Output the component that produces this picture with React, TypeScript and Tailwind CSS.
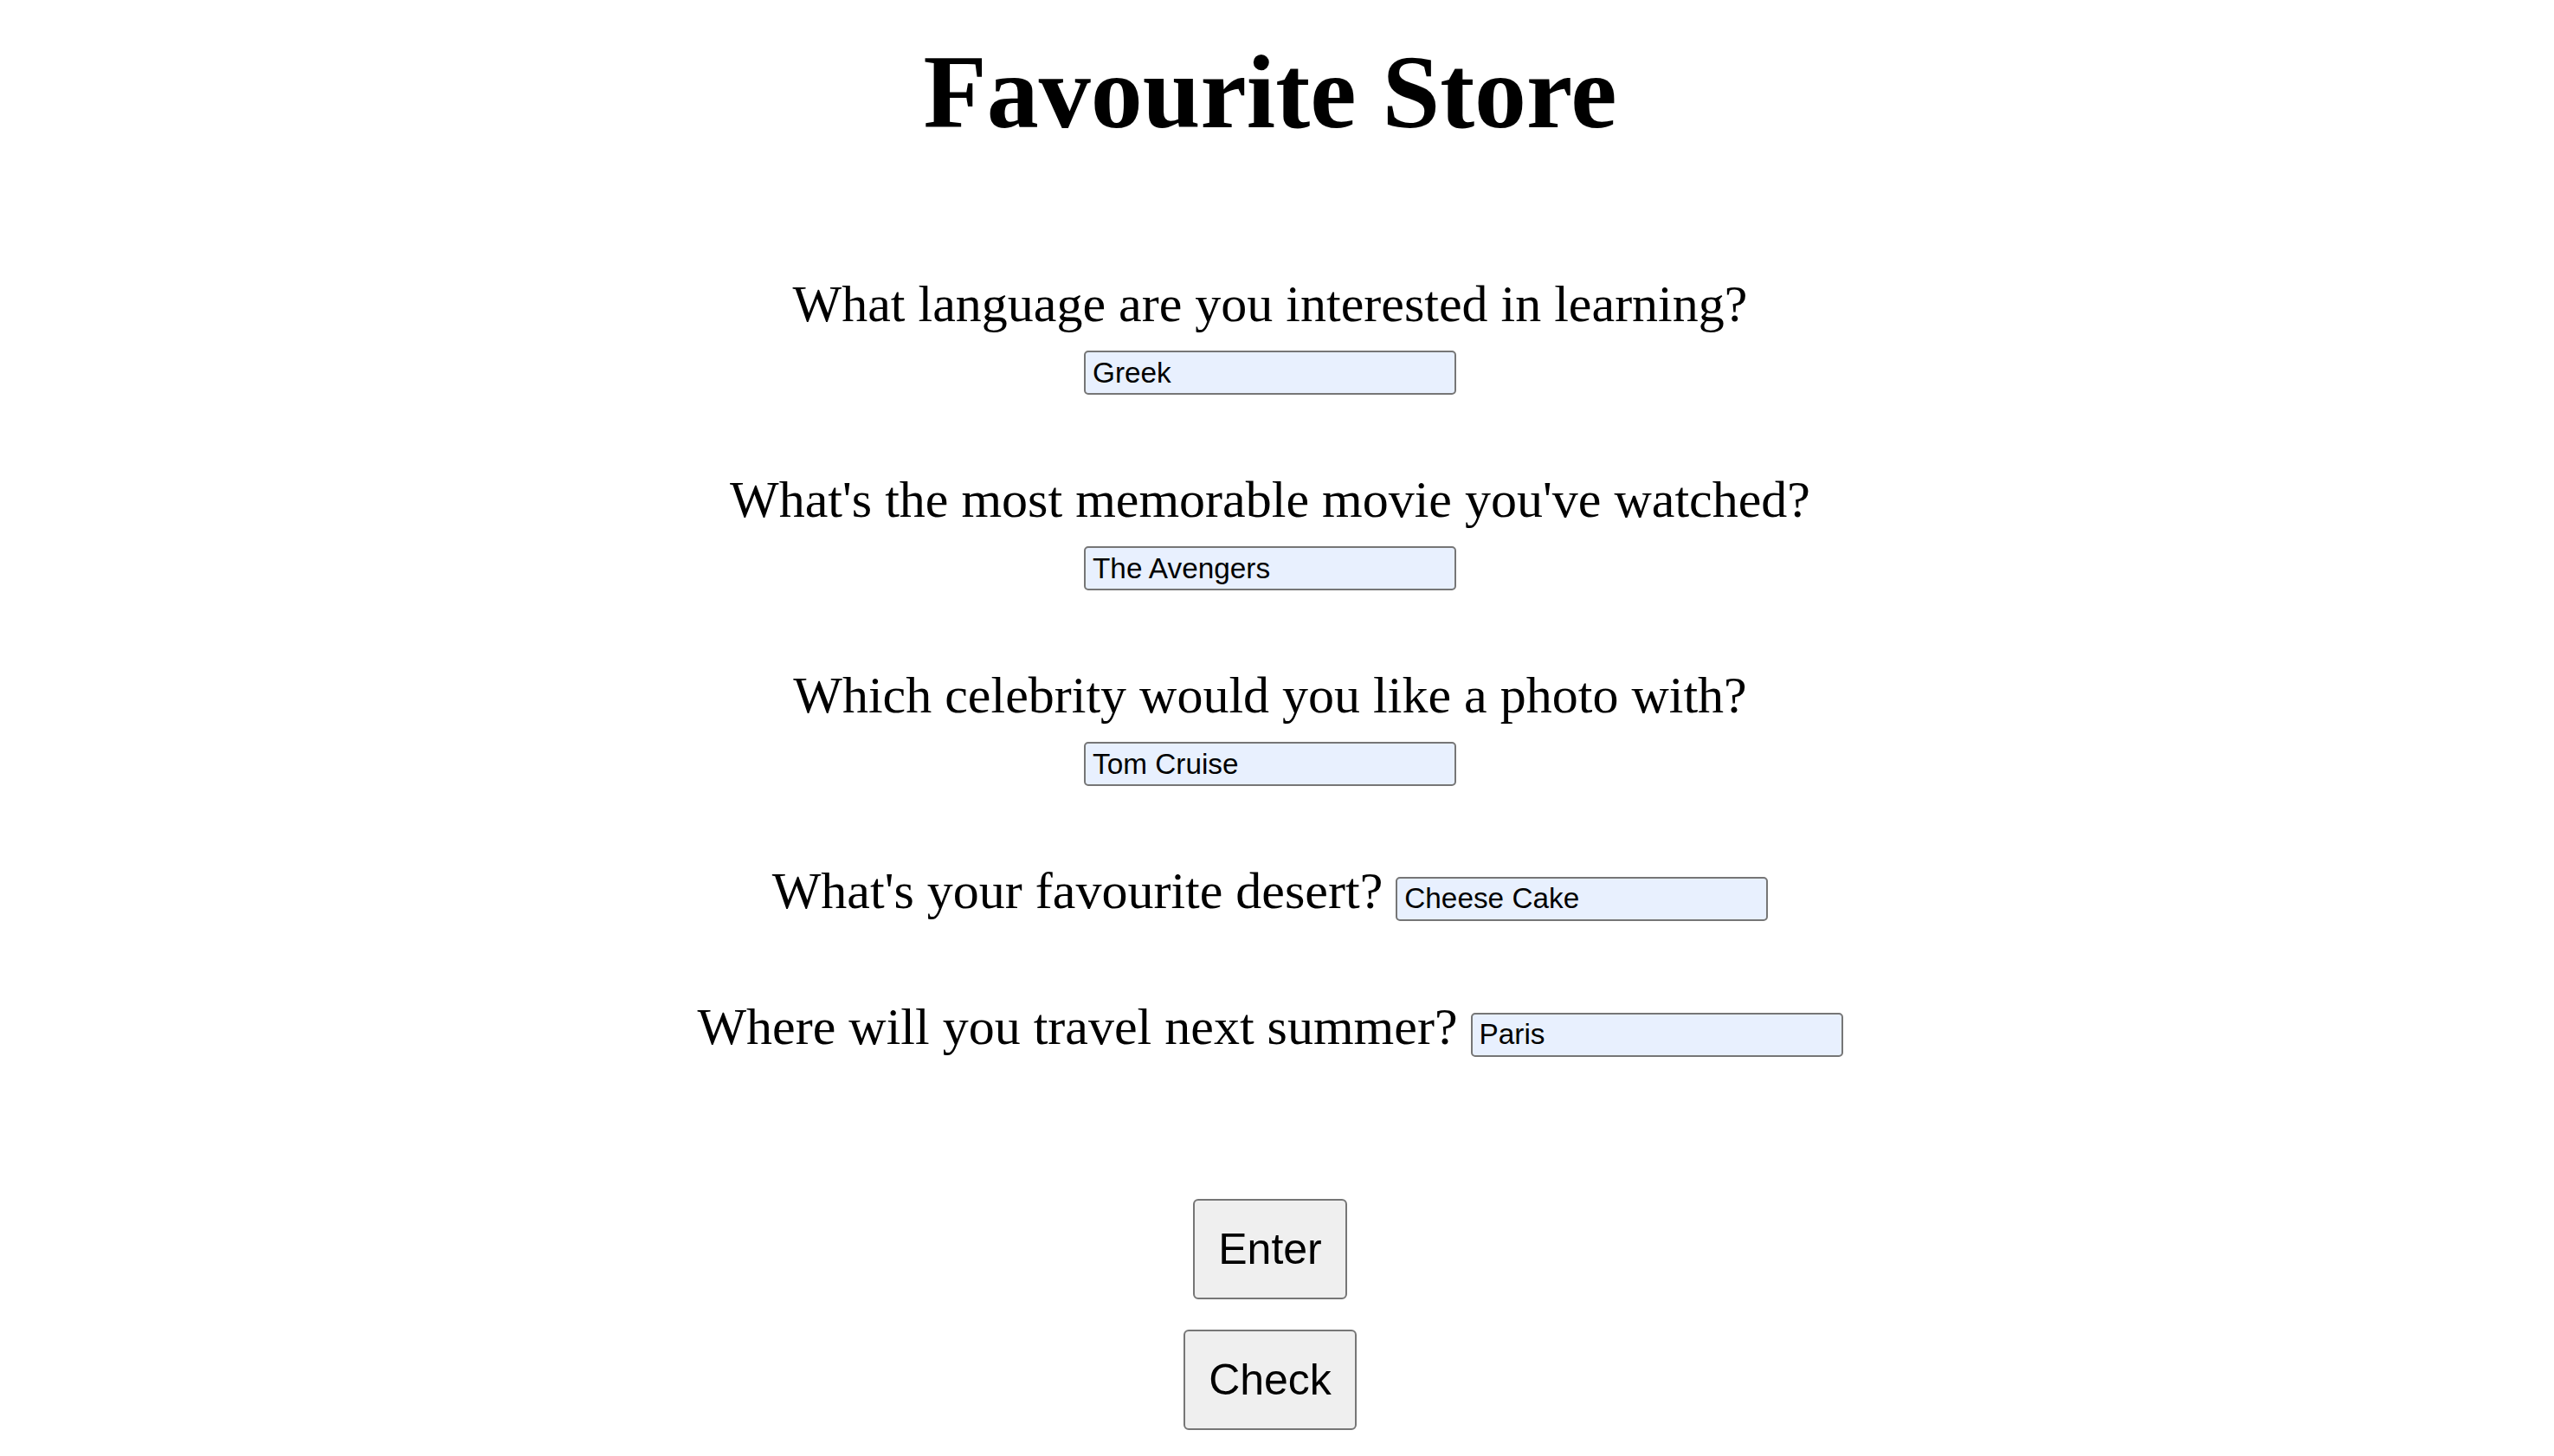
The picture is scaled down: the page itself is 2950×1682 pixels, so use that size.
import React from "react";

const inputCls =
  "w-[430px] h-[51px] border-2 border-solid border-[#767676] rounded-[5px] bg-[#e8f0fe] pl-[8px] pr-[4px] text-[33.33px] leading-[normal] text-black font-['Liberation_Sans',Arial,sans-serif] outline-none";

const qCls = "text-[60px] leading-[69px] text-black font-['Liberation_Serif','Times_New_Roman',serif]";

function StackedQuestion({ q, v, mt }: { q: string; v: string; mt: string }) {
  return (
    <div className={`flex flex-col items-center ${mt}`}>
      <div className={qCls}>{q}</div>
      <input readOnly value={v} className={`${inputCls} block mt-[19px]`} />
    </div>
  );
}

function InlineQuestion({ q, v, mt }: { q: string; v: string; mt: string }) {
  return (
    <div className={`${qCls} text-center ${mt} whitespace-nowrap`}>
      {q}{" "}
      <input readOnly value={v} className={`${inputCls} inline-block align-baseline`} />
    </div>
  );
}

const btnCls =
  "h-[116px] px-[27px] border-2 border-solid border-[#767676] rounded-[6px] bg-[#efefef] text-[50px] leading-[normal] text-black font-['Liberation_Sans',Arial,sans-serif]";

export default function App() {
  return (
    <div className="w-full min-h-[1682px] bg-white pr-[16px] pt-[38px]">
      <h1 className="text-center text-[120px] leading-[138px] font-bold text-black font-['Liberation_Serif','Times_New_Roman',serif]">
        Favourite Store
      </h1>
      <StackedQuestion mt="mt-[141px]" q="What language are you interested in learning?" v="Greek" />
      <StackedQuestion mt="mt-[87px]" q="What's the most memorable movie you've watched?" v="The Avengers" />
      <StackedQuestion mt="mt-[87px]" q="Which celebrity would you like a photo with?" v="Tom Cruise" />
      <InlineQuestion mt="mt-[87px]" q="What's your favourite desert?" v="Cheese Cake" />
      <InlineQuestion mt="mt-[88px]" q="Where will you travel next summer?" v="Paris" />
      <div className="flex flex-col items-center mt-[164px]">
        <button className={btnCls}>Enter</button>
        <button className={`${btnCls} mt-[35px]`}>Check</button>
      </div>
    </div>
  );
}
